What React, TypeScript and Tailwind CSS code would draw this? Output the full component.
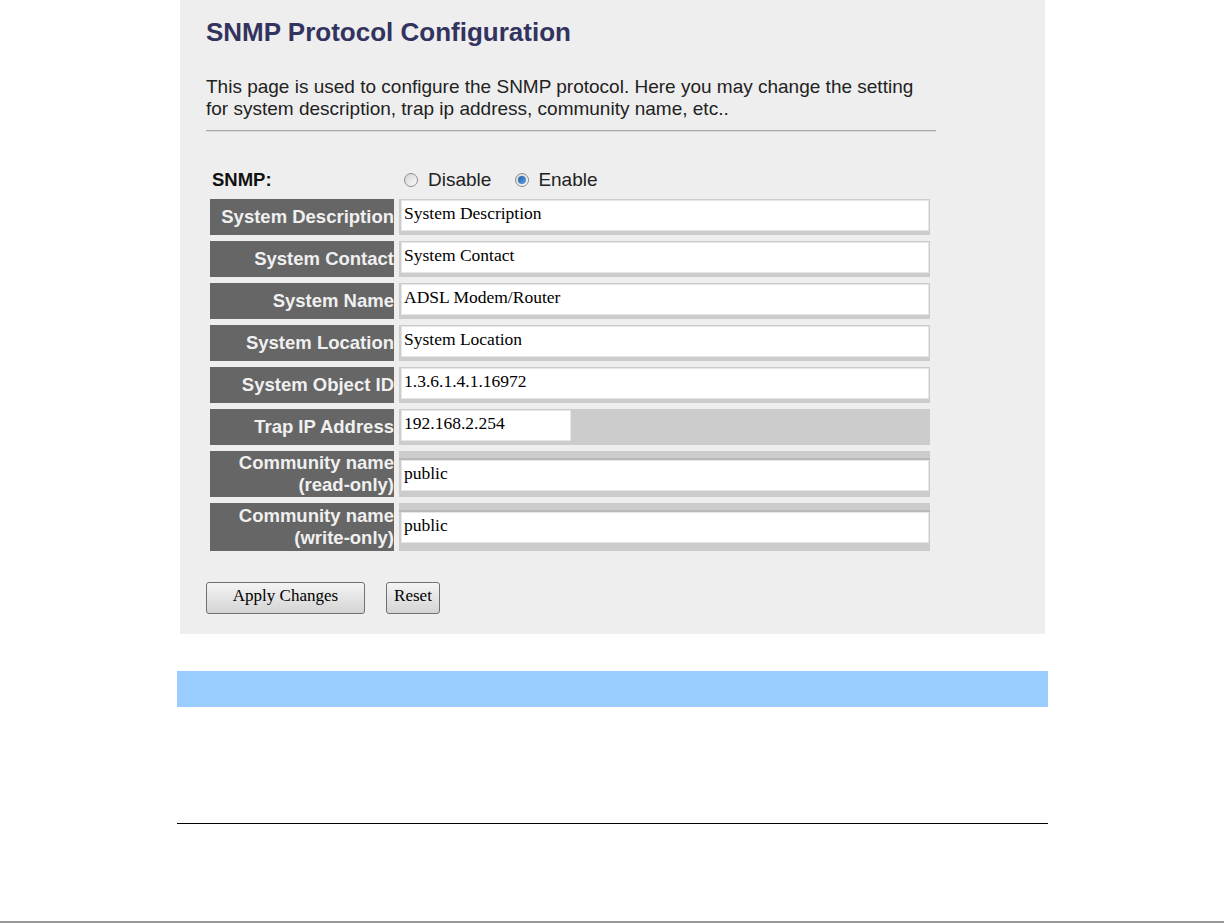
import React from "react";

const sans = { fontFamily: '"Liberation Sans", Arial, sans-serif' };
const serif = { fontFamily: '"Liberation Serif", "Times New Roman", serif' };

function Radio({ checked }: { checked?: boolean }) {
  return (
    <span className="inline-flex items-center justify-center w-[14px] h-[14px] rounded-full border border-[#8e8e8e] bg-gradient-to-br from-[#d4d4d4] to-[#fbfbfb]">
      {checked ? (
        <span className="w-[8px] h-[8px] rounded-full bg-gradient-to-br from-[#1d5a9e] to-[#62a8e8]" />
      ) : null}
    </span>
  );
}

function Field({ value, short }: { value: string; short?: boolean }) {
  return (
    <div
      className={`${short ? "w-[170px]" : "w-[528px]"} h-[31px] ml-[2px] shrink-0 bg-white border border-[#e6e6e6] flex items-center pl-[2px] pb-[5px] text-[17.5px] text-black`}
      style={serif}
    >
      {value}
    </div>
  );
}

function Row({
  label,
  value,
  tall,
  short,
}: {
  label: string[];
  value: string;
  tall?: number;
  short?: boolean;
}) {
  return (
    <div className={`flex gap-[5px] ${tall === 46 ? "h-[46px]" : tall === 48 ? "h-[48px]" : "h-[36px]"}`}>
      <div
        className="w-[184px] shrink-0 bg-[#666666] text-[#f0f0f0] font-bold text-[18.5px] leading-[22px] text-right flex flex-col justify-center items-end whitespace-nowrap"
        style={sans}
      >
        {label.map((l) => (
          <span key={l}>{l}</span>
        ))}
      </div>
      {tall ? (
        <div className="w-[531px] bg-[#cccccc] flex flex-col">
          <div className="h-[9px] shrink-0 border-b-2 border-[#b8b8b8]" />
          <Field value={value} />
        </div>
      ) : (
        <div className="w-[531px] bg-[#cccccc] flex items-start pt-[1px]">
          <Field value={value} short={short} />
        </div>
      )}
    </div>
  );
}

export default function App() {
  return (
    <div className="w-[1224px] h-[923px] bg-white flex flex-col overflow-hidden">
      <div className="ml-[180px] w-[865px] h-[634px] bg-[#eeeeee] flex flex-col pl-[26px] shrink-0" style={sans}>
        <div className="mt-[17px] text-[26px] leading-[30px] font-bold text-[#33335f] whitespace-nowrap">
          SNMP Protocol Configuration
        </div>
        <div className="mt-[29px] text-[19px] leading-[22px] text-[#222] w-[760px] whitespace-nowrap">
          This page is used to configure the SNMP protocol. Here you may change the setting
          <br />
          for system description, trap ip address, community name, etc..
        </div>
        <div className="mt-[10px] w-[730px] h-[2px] bg-[#a8a8a8] border-b border-[#dcdcdc]" />
        <div className="ml-[4px] mt-[37px] flex items-center h-[22px]">
          <div className="w-[194px] font-bold text-[18.5px] text-[#111] pl-[2px]">SNMP:</div>
          <Radio />
          <span className="ml-[10px] text-[19px] text-[#222]">Disable</span>
          <span className="ml-[24px] flex items-center">
            <Radio checked />
          </span>
          <span className="ml-[9px] text-[19px] text-[#222]">Enable</span>
        </div>
        <div className="ml-[4px] mt-[8px] flex flex-col gap-[6px]">
          <Row label={["System Description"]} value="System Description" />
          <Row label={["System Contact"]} value="System Contact" />
          <Row label={["System Name"]} value="ADSL Modem/Router" />
          <Row label={["System Location"]} value="System Location" />
          <Row label={["System Object ID"]} value="1.3.6.1.4.1.16972" />
          <Row label={["Trap IP Address"]} value="192.168.2.254" short />
          <Row label={["Community name", "(read-only)"]} value="public" tall={46} />
          <Row label={["Community name", "(write-only)"]} value="public" tall={48} />
        </div>
        <div className="mt-[31px] flex items-center gap-[21px]" style={serif}>
          <button className="w-[159px] h-[32px] rounded-[3px] border border-[#707070] bg-gradient-to-b from-[#f4f4f4] to-[#d4d4d4] text-[17px] text-black pb-[5px]">
            Apply Changes
          </button>
          <button className="w-[54px] h-[32px] rounded-[3px] border border-[#707070] bg-gradient-to-b from-[#f4f4f4] to-[#d4d4d4] text-[17px] text-black pb-[5px]">
            Reset
          </button>
        </div>
      </div>
      <div className="mt-[37px] ml-[177px] w-[871px] h-[36px] bg-[#99ccff] shrink-0" />
      <div className="mt-[116px] ml-[177px] w-[871px] h-px bg-black shrink-0" />
      <div className="mt-[97px] w-full h-[2px] bg-[#999999] shrink-0" />
    </div>
  );
}
